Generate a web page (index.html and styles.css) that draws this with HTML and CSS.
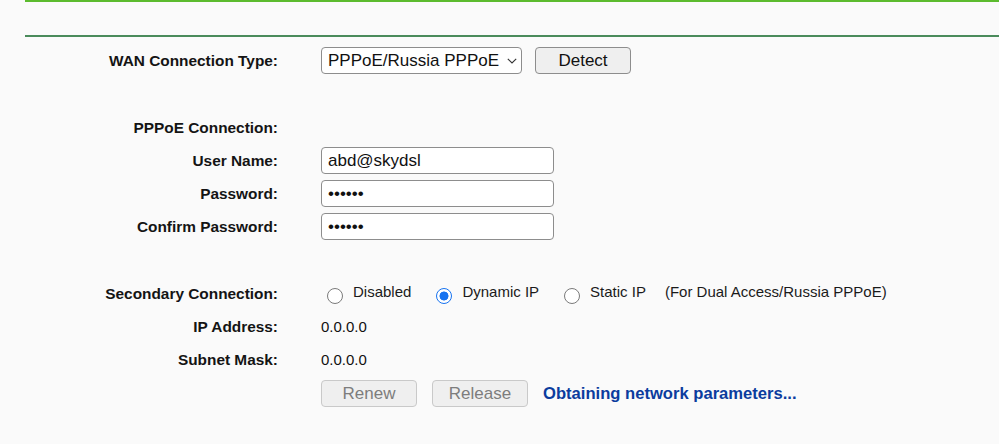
FILE: index.html
```html
<!DOCTYPE html>
<html>
<head>
<meta charset="utf-8">
<link rel="stylesheet" href="styles.css">
</head>
<body>
<div class="header"></div>
<div class="form">
  <div class="section first">
    <div class="row">
      <div class="label">WAN Connection Type:</div>
      <div class="field">
        <span class="select-wrap">
          <select class="select"><option>PPPoE/Russia PPPoE</option></select>
          <svg class="chevron" width="10" height="6" viewBox="0 0 10 6"><path d="M0.8 0.8 L5 5 L9.2 0.8" fill="none" stroke="#333" stroke-width="1.1"/></svg>
        </span>
        <button class="btn detect">Detect</button>
      </div>
    </div>
  </div>
  <div class="section gap">
    <div class="row">
      <div class="label">PPPoE Connection:</div>
      <div class="field"></div>
    </div>
    <div class="row">
      <div class="label">User Name:</div>
      <div class="field"><input class="text" type="text" value="abd@skydsl"></div>
    </div>
    <div class="row">
      <div class="label">Password:</div>
      <div class="field"><input class="text" type="password" value="123456"></div>
    </div>
    <div class="row">
      <div class="label">Confirm Password:</div>
      <div class="field"><input class="text" type="password" value="123456"></div>
    </div>
  </div>
  <div class="section gap">
    <div class="row">
      <div class="label">Secondary Connection:</div>
      <div class="field radios">
        <input class="radio r1" type="radio" name="sec"><span class="rlabel">Disabled</span>
        <input class="radio rn" type="radio" name="sec" checked><span class="rlabel">Dynamic IP</span>
        <input class="radio rn" type="radio" name="sec"><span class="rlabel">Static IP</span>
        <span class="rlabel note">(For Dual Access/Russia PPPoE)</span>
      </div>
    </div>
    <div class="row">
      <div class="label">IP Address:</div>
      <div class="field value">0.0.0.0</div>
    </div>
    <div class="row">
      <div class="label">Subnet Mask:</div>
      <div class="field value">0.0.0.0</div>
    </div>
    <div class="row buttons">
      <div class="label"></div>
      <div class="field">
        <button class="btn" disabled>Renew</button>
        <button class="btn release" disabled>Release</button>
        <span class="status">Obtaining network parameters...</span>
      </div>
    </div>
  </div>
</div>
</body>
</html>
```
FILE: styles.css
```css
html, body {
  margin: 0;
  padding: 0;
  background: #fafafa;
  font-family: "Liberation Sans", Arial, sans-serif;
  color: #111;
}
.header {
  margin-left: 25px;
  height: 33px;
  border-top: 2px solid #5cbb2e;
  border-bottom: 2px solid #4a8b5b;
}
.form {
  display: flex;
  flex-direction: column;
}
.section {
  display: flex;
  flex-direction: column;
  row-gap: 6px;
}
.section.first {
  margin-top: 10px;
}
.section.gap {
  margin-top: 40px;
}
.row {
  display: grid;
  grid-template-columns: 278px 1fr;
  column-gap: 43px;
  height: 27px;
  align-items: center;
}
.row.buttons {
  margin-top: 1px;
}
.label {
  text-align: right;
  font-weight: bold;
  font-size: 15.4px;
  color: #141414;
}
.field {
  display: flex;
  align-items: center;
  height: 27px;
}
.value {
  font-size: 15px;
  color: #111;
}
.select-wrap {
  position: relative;
  display: inline-flex;
}
.select {
  appearance: none;
  -webkit-appearance: none;
  width: 201px;
  height: 27px;
  box-sizing: border-box;
  border: 1px solid #8d8d8d;
  border-radius: 4px;
  background: #fff;
  font-family: "Liberation Sans", Arial, sans-serif;
  font-size: 17px;
  color: #111;
  padding: 0 0 0 6px;
  margin: 0;
}
.chevron {
  position: absolute;
  left: 186px;
  top: 11px;
}
.btn {
  width: 96px;
  height: 27px;
  box-sizing: border-box;
  border: 1px solid #8d8d8d;
  border-radius: 4px;
  background: #efefef;
  font-family: "Liberation Sans", Arial, sans-serif;
  font-size: 17px;
  color: #111;
  padding: 0;
  margin: 0;
}
.btn.detect {
  margin-left: 13px;
}
.btn:disabled {
  border-color: #c9c9c9;
  background: #efefef;
  color: #7d7d7d;
}
.btn.release {
  margin-left: 15px;
}
.status {
  margin-left: 15px;
  font-weight: bold;
  font-size: 16.6px;
  color: #0b3c9e;
}
.text {
  width: 233px;
  height: 27px;
  box-sizing: border-box;
  border: 1px solid #8d8d8d;
  border-radius: 4px;
  background: #fff;
  font-family: "Liberation Sans", Arial, sans-serif;
  font-size: 17px;
  color: #111;
  padding: 0 6px;
  margin: 0;
}
.radios {
  font-size: 15px;
  color: #1a1a1a;
}
.rlabel {
  padding-bottom: 4px;
}
.radio {
  appearance: none;
  -webkit-appearance: none;
  width: 16px;
  height: 16px;
  box-sizing: border-box;
  border: 1px solid #7a7a7a;
  border-radius: 50%;
  background: #fff;
  margin: 5px 10px 0 0;
}
.radio:checked {
  border: 1.5px solid #1773f0;
  background: radial-gradient(circle, #1773f0 0 4.2px, #fff 4.8px);
}
.r1 {
  margin-left: 6px;
}
.rn {
  margin-left: 25px;
}
.note {
  margin-left: 19px;
}
```
